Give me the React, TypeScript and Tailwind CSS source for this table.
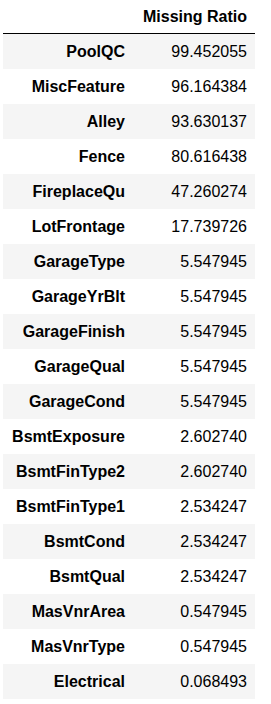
import React from "react";

const rows: [string, string][] = [
  ["PoolQC", "99.452055"],
  ["MiscFeature", "96.164384"],
  ["Alley", "93.630137"],
  ["Fence", "80.616438"],
  ["FireplaceQu", "47.260274"],
  ["LotFrontage", "17.739726"],
  ["GarageType", "5.547945"],
  ["GarageYrBlt", "5.547945"],
  ["GarageFinish", "5.547945"],
  ["GarageQual", "5.547945"],
  ["GarageCond", "5.547945"],
  ["BsmtExposure", "2.602740"],
  ["BsmtFinType2", "2.602740"],
  ["BsmtFinType1", "2.534247"],
  ["BsmtCond", "2.534247"],
  ["BsmtQual", "2.534247"],
  ["MasVnrArea", "0.547945"],
  ["MasVnrType", "0.547945"],
  ["Electrical", "0.068493"],
];

export default function App() {
  return (
    <div
      className="w-[271px] h-[704px] bg-white text-black text-[16px] pl-[3px]"
      style={{ fontFamily: '"Liberation Sans", Arial, sans-serif' }}
    >
      <div className="w-[252px] flex flex-col">
        <div className="flex h-[34px] border-b border-black">
          <div className="w-[130px]" />
          <div className="w-[122px] flex items-center justify-end pr-[8px] font-bold leading-none">
            Missing Ratio
          </div>
        </div>
        {rows.map(([k, v], i) => (
          <div
            key={k}
            className={`flex h-[35px] ${i % 2 === 0 ? "bg-[#f5f5f5]" : "bg-white"}`}
          >
            <div className="w-[130px] flex items-center justify-end pr-[8px] font-bold leading-none">
              {k}
            </div>
            <div className="w-[122px] flex items-center justify-end pr-[8px] leading-none">
              {v}
            </div>
          </div>
        ))}
      </div>
    </div>
  );
}
